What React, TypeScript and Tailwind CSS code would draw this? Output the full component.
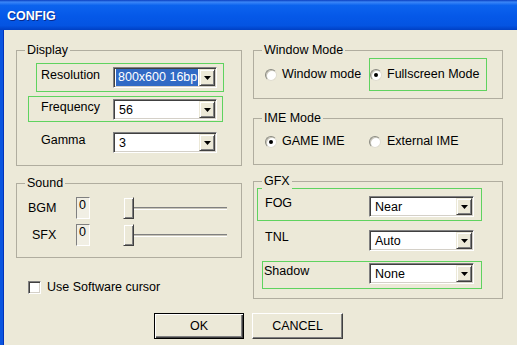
import React from "react";

const FONT = "font-['Liberation_Sans',Arial,sans-serif]";

function Group({ title, className, children }: { title: string; className: string; children?: React.ReactNode }) {
  return (
    <div className={`relative border border-[#b0ad9f] ${className}`}>
      <span className="absolute -top-[8px] left-[8px] bg-[#ECE9D8] px-[2px] text-[12.5px] leading-[15px] text-black">
        {title}
      </span>
      {children}
    </div>
  );
}

function Arrow() {
  return (
    <div className="flex h-[17px] w-[16px] shrink-0 items-center justify-center border border-t-[#ECE9D8] border-l-[#ECE9D8] border-b-[#404040] border-r-[#404040] bg-[#ECE9D8] shadow-[inset_1px_1px_0_#ffffff,inset_-1px_-1px_0_#808080]">
      <svg width="7" height="4" viewBox="0 0 7 4">
        <path d="M0 0H7L3.5 4Z" fill="#000" />
      </svg>
    </div>
  );
}

function Select({ value, selected, width }: { value: string; selected?: boolean; width: string }) {
  return (
    <div
      className={`flex h-[21px] ${width} shrink-0 items-center border border-t-[#808080] border-l-[#808080] border-b-white border-r-white bg-white p-[1px] shadow-[inset_1px_1px_0_#404040,inset_-1px_-1px_0_#d4d0c8]`}
    >
      <div className="flex h-full flex-1 items-center overflow-hidden pl-[1px] pr-[1px]">
        {selected ? (
          <span className="flex h-[17px] w-full items-center whitespace-nowrap bg-[#316AC5] pl-[2px] text-[12.5px] text-white">
            {value}
          </span>
        ) : (
          <span className="pl-[3px] pt-[2px] text-[12.5px] text-black">{value}</span>
        )}
      </div>
      <Arrow />
    </div>
  );
}

function Radio({ checked }: { checked?: boolean }) {
  return (
    <div className="flex h-[12px] w-[12px] shrink-0 items-center justify-center rounded-full border border-t-[#8a8a80] border-l-[#8a8a80] border-b-[#e0ddd0] border-r-[#e0ddd0] bg-white shadow-[inset_1px_1px_0_#c8c5b8]">
      {checked && <div className="h-[4px] w-[4px] rounded-full bg-black" />}
    </div>
  );
}

function EditBox() {
  return (
    <div className="h-[22px] w-[14px] shrink-0 border border-t-[#808080] border-l-[#808080] border-b-white border-r-white bg-[#F1EFE4] pl-[2px] text-[12.5px] leading-[15px] text-black">
      0
    </div>
  );
}

function Slider() {
  return (
    <div className="relative flex h-[22px] w-[104px] shrink-0 items-center">
      <div className="h-[3px] w-full border-t border-t-[#808080] border-b border-b-white bg-[#c8c5b8]" />
      <div className="absolute left-0 top-0 h-[22px] w-[11px] border border-t-[#ECE9D8] border-l-[#ECE9D8] border-b-[#404040] border-r-[#404040] bg-[#ECE9D8] shadow-[inset_1px_1px_0_#ffffff,inset_-1px_-1px_0_#808080]" />
    </div>
  );
}

export default function App() {
  return (
    <div className={`flex h-[345px] w-[517px] flex-col overflow-hidden bg-[#ECE9D8] ${FONT} text-black`}>
      {/* title bar */}
      <div className="flex h-[30px] items-center bg-[linear-gradient(to_bottom,#0a3fc0_0%,#3a86f8_7%,#0b63ee_18%,#0558e8_55%,#0454e2_85%,#0040c4_100%)] pl-[7px] pt-[3px]">
        <span className="text-[12.5px] font-bold text-white [text-shadow:1px_1px_0_#0a2a8a]">CONFIG</span>
      </div>

      <div className="flex flex-1">
        <div className="w-[4px] border-r border-r-[#0033bb] bg-[#0a55e0]" />
        <div className="flex flex-1 flex-col pl-[12px] pt-[20px]">
          <div className="flex items-start gap-[11px]">
            {/* left column */}
            <div className="flex w-[226px] flex-col">
              <Group title="Display" className="h-[116px] w-[226px]">
                <div className="ml-[19px] mt-[12px] flex h-[29px] w-[188px] items-start border border-[#5fd35f] pl-[4px] pt-[3px]">
                  <span className="mt-[1px] w-[72px] text-[12.5px] leading-[15px]">Resolution</span>
                  <Select value="800x600 16bp" selected width="w-[104px]" />
                </div>
                <div className="ml-[11px] mt-[4px] flex h-[26px] w-[195px] items-start border border-[#5fd35f] pl-[12px] pt-[2px]">
                  <span className="mt-[1px] w-[72px] text-[12.5px] leading-[15px]">Frequency</span>
                  <Select value="56" width="w-[104px]" />
                </div>
                <div className="ml-[24px] mt-[10px] flex items-start">
                  <span className="mt-[1px] w-[72px] text-[12.5px] leading-[15px]">Gamma</span>
                  <Select value="3" width="w-[104px]" />
                </div>
              </Group>

              <Group title="Sound" className="mt-[17px] h-[75px] w-[226px]">
                <div className="ml-[11px] mt-[13px] flex items-center">
                  <span className="w-[48px] text-[12.5px] leading-[15px]">BGM</span>
                  <EditBox />
                  <div className="ml-[33px]">
                    <Slider />
                  </div>
                </div>
                <div className="ml-[15px] mt-[5px] flex items-center">
                  <span className="w-[44px] text-[12.5px] leading-[15px]">SFX</span>
                  <EditBox />
                  <div className="ml-[33px]">
                    <Slider />
                  </div>
                </div>
              </Group>

              <div className="ml-[12px] mt-[22px] flex items-center gap-[6px]">
                <div className="h-[13px] w-[13px] border border-t-[#808080] border-l-[#808080] border-b-white border-r-white bg-white shadow-[inset_1px_1px_0_#404040,inset_-1px_-1px_0_#d4d0c8]" />
                <span className="text-[12.5px] leading-[15px]">Use Software cursor</span>
              </div>
            </div>

            {/* right column */}
            <div className="flex w-[250px] flex-col">
              <Group title="Window Mode" className="h-[49px] w-[250px]">
                <div className="ml-[11px] mt-[7px] flex items-center">
                  <div className="flex w-[104px] items-center gap-[5px]">
                    <Radio />
                    <span className="text-[12.5px] leading-[15px]">Window mode</span>
                  </div>
                  <div className="flex h-[33px] w-[118px] items-center gap-[5px] border border-[#5fd35f]">
                    <Radio checked />
                    <span className="text-[12.5px] leading-[15px]">Fullscreen Mode</span>
                  </div>
                </div>
              </Group>

              <Group title="IME Mode" className="mt-[19px] h-[47px] w-[250px]">
                <div className="ml-[11px] mt-[15px] flex items-center">
                  <div className="flex w-[104px] items-center gap-[5px]">
                    <Radio checked />
                    <span className="text-[12.5px] leading-[15px]">GAME IME</span>
                  </div>
                  <div className="flex items-center gap-[6px]">
                    <Radio />
                    <span className="text-[12.5px] leading-[15px]">External IME</span>
                  </div>
                </div>
              </Group>

              <Group title="GFX" className="mt-[16px] h-[118px] w-[250px]">
                <div className="ml-[3px] mt-[6px] flex h-[33px] w-[225px] items-start border border-[#5fd35f] pl-[7px] pt-[7px]">
                  <span className="w-[104px] text-[12.5px] leading-[15px]">FOG</span>
                  <Select value="Near" width="w-[105px]" />
                </div>
                <div className="ml-[11px] mt-[9px] flex items-start">
                  <span className="w-[104px] text-[12.5px] leading-[15px]">TNL</span>
                  <Select value="Auto" width="w-[105px]" />
                </div>
                <div className="ml-[8px] mt-[10px] flex h-[28px] w-[220px] items-start border border-[#5fd35f] pl-[1px] pt-[1px]">
                  <span className="mt-[1px] w-[105px] text-[12.5px] leading-[15px]">Shadow</span>
                  <Select value="None" width="w-[105px]" />
                </div>
              </Group>
            </div>
          </div>

          {/* buttons */}
          <div className="ml-[138px] mt-[14px] flex gap-[8px]">
            <div className="flex h-[26px] w-[90px] items-center justify-center border border-black bg-[#ECE9D8] shadow-[inset_1px_1px_0_#ffffff,inset_-1px_-1px_0_#404040,inset_-2px_-2px_0_#808080] text-[12.5px]">
              OK
            </div>
            <div className="flex h-[26px] w-[91px] items-center justify-center border border-t-white border-l-white border-b-[#404040] border-r-[#404040] bg-[#ECE9D8] shadow-[inset_-1px_-1px_0_#808080] text-[12.5px]">
              CANCEL
            </div>
          </div>
        </div>
      </div>
    </div>
  );
}
